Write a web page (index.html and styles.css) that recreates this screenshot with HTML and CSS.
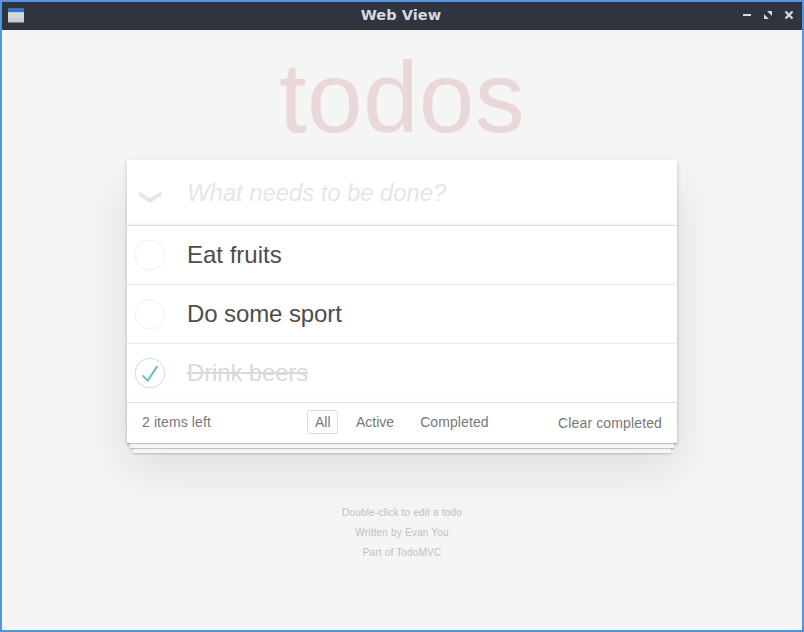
FILE: index.html
```html
<!DOCTYPE html>
<html lang="en">
<head>
<meta charset="utf-8">
<title>Web View</title>
<link rel="stylesheet" href="styles.css">
</head>
<body>
<div class="window">
  <header class="titlebar">
    <svg class="app-icon" width="16" height="16" viewBox="0 0 16 16"><defs><linearGradient id="g" x1="0" y1="0" x2="0" y2="1"><stop offset="0" stop-color="#e8e8e8"/><stop offset="1" stop-color="#c4c5c7"/></linearGradient></defs><rect width="16" height="15" fill="url(#g)"/><rect width="16" height="4" fill="#3b74b8"/><path d="M0 4.500h16" stroke="#a9c8ee"/><path d="M0 14.500h16" stroke="#6d7f98"/></svg>
    <span class="window-title">Web View</span>
    <svg class="controls" width="52" height="12" viewBox="0 0 52 12"><path d="M1 6h8" stroke="#d3dae3" stroke-width="2"/><path d="M25 2h5v5zM22 5v5h5z" fill="#d3dae3"/><path d="M43.500 2.500l7 7M50.500 2.500l-7 7" stroke="#d3dae3" stroke-width="2.300"/></svg>
  </header>
  <main class="page">
    <h1>todos</h1>
    <section class="todoapp">
      <div class="new-todo"><svg class="chevron" width="24" height="14" viewBox="0 0 24 14"><path d="M1 .5v4.500l11 7 11-7V.5L12 7z" fill="#e6e6e6"/></svg><span class="placeholder">What needs to be done?</span></div>
      <ul class="todo-list">
        <li><svg class="toggle" width="40" height="40" viewBox="-10 -18 100 135"><circle cx="50" cy="50" r="50" fill="none" stroke="#ededed" stroke-width="3"/></svg><label>Eat fruits</label></li>
        <li><svg class="toggle" width="40" height="40" viewBox="-10 -18 100 135"><circle cx="50" cy="50" r="50" fill="none" stroke="#ededed" stroke-width="3"/></svg><label class="sport">Do some sport</label></li>
        <li class="completed"><svg class="toggle" width="40" height="40" viewBox="-10 -18 100 135"><circle cx="50" cy="50" r="50" fill="none" stroke="#bddad5" stroke-width="3"/><path fill="#5dc2af" stroke="#5dc2af" d="M72 25L42 71 27 56l-4 4 20 20 34-52z"/></svg><label>Drink beers</label></li>
      </ul>
      <footer class="footer">
        <span class="count">2 items left</span>
        <nav class="filters"><a class="selected">All</a><a>Active</a><a>Completed</a></nav>
        <span class="clear">Clear completed</span>
      </footer>
    </section>
    <div class="info"><p>Double-click to edit a todo</p><p>Written by Evan You</p><p>Part of TodoMVC</p></div>
  </main>
</div>
</body>
</html>
```

FILE: styles.css
```css
* { box-sizing: border-box; }
body { margin: 0; font: 14px/20px "Liberation Sans", Arial, sans-serif; color: #4d4d4d; }
.window { width: 804px; height: 632px; border: 2px solid #5294e2; background: #f5f5f5; overflow: hidden; }
.titlebar { height: 28px; display: grid; grid-template-columns: 60px 1fr 60px; align-items: center; background: #2f343f; color: #d3dae3; }
.app-icon { margin-left: 6px; margin-top: -1px; }
.window-title { text-align: center; font: bold 14.600px/20px "DejaVu Sans", sans-serif; margin: -3px 2px 0 0; }
.controls { margin-top: -2px; }
.page { width: 550px; margin: 0 auto; }
h1 { margin: 0; height: 130px; padding-top: 10px; font-size: 100px; line-height: 114px; font-weight: 400; letter-spacing: .3px; text-align: center; color: rgba(175,47,47,.15); }
.todoapp { background: #fff; box-shadow: 0 2px 4px rgba(0,0,0,.2), 0 25px 50px rgba(0,0,0,.1); }
.new-todo { height: 65px; display: flex; align-items: center; font-size: 24px; font-style: italic; color: #e6e6e6; box-shadow: inset 0 -2px 1px rgba(0,0,0,.03); }
.placeholder { letter-spacing: -.1px; }
.chevron { margin: 10px 25px 0 11px; }
.todo-list { margin: 0; padding: 0; list-style: none; border-top: 1px solid #e0e0e0; }
li { height: 59px; display: flex; align-items: center; font-size: 24px; border-bottom: 1px solid #ebebeb; }
li:last-child { border-bottom: 0; height: 58px; background: linear-gradient(#f9f9f9, #f9f9f9) 0 48px / 100% 1px no-repeat; }
.toggle { margin: 0 20px 0 0; }
.sport { letter-spacing: -.1px; }
.completed label { color: #d9d9d9; letter-spacing: -.15px; text-decoration: line-through; }
.footer { height: 41px; padding: 0 15px; border-top: 1px solid #e0e0e0; display: grid; grid-template-columns: 165px 1fr auto; align-items: center; color: #777; box-shadow: 0 1px 1px rgba(0,0,0,.2), 0 8px 0 -3px #f6f6f6, 0 9px 1px -3px rgba(0,0,0,.2), 0 16px 0 -6px #f6f6f6, 0 17px 2px -6px rgba(0,0,0,.2); }
.count { letter-spacing: .1px; margin-top: -2px; }
.clear { letter-spacing: .13px; }
.filters { display: flex; gap: 10px; margin-top: -2px; }
.filters a { padding: 1px 7px; border: 1px solid transparent; border-radius: 3px; }
.filters a:nth-child(3) { letter-spacing: .1px; }
.filters .selected { width: 31px; border-color: rgba(175,47,47,.2); }
.info { margin-top: 60px; text-align: center; font-size: 10px; letter-spacing: .18px; color: #bfbfbf; }
.info p { margin: 0; line-height: 20px; }
```
